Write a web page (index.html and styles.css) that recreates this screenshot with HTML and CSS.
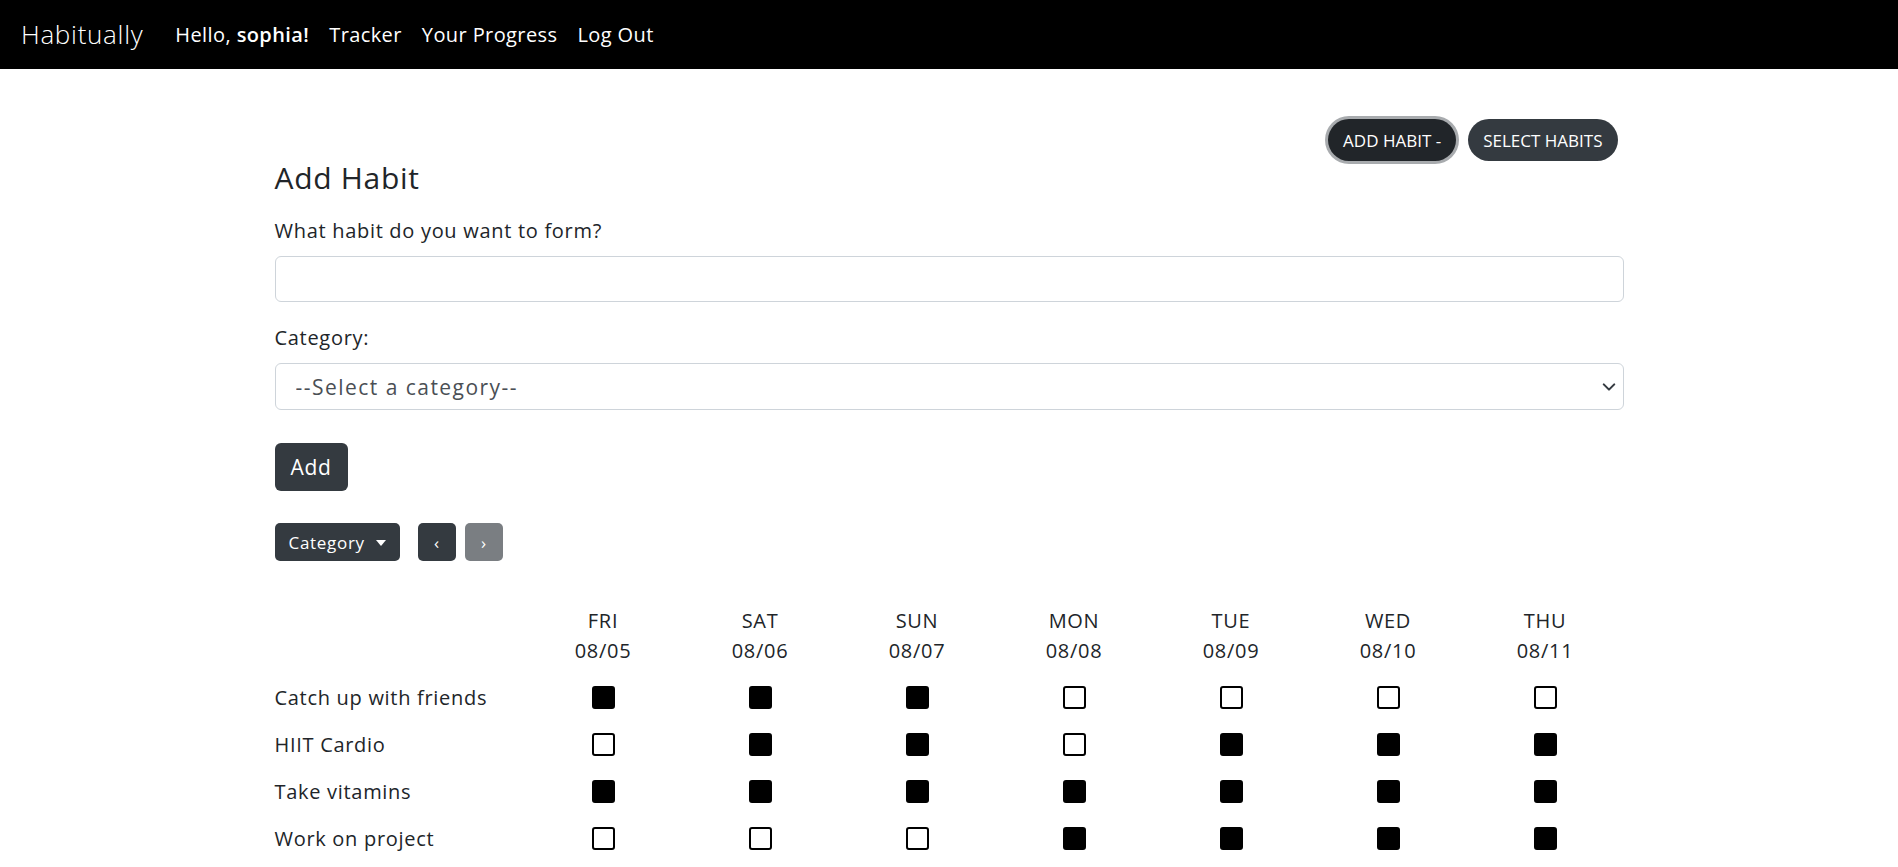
FILE: index.html
```html
<!DOCTYPE html>
<html lang="en">
<head>
  <meta charset="UTF-8" />
  <meta name="viewport" content="width=device-width, initial-scale=1.0"/>
  <title>Habitually</title>
  <link rel="stylesheet" href="styles.css">
</head>
<body>
  <nav class="navbar">
    <a class="brand" href="#">Habitually</a>
    <ul class="nav-links">
      <li><span>Hello, <strong>sophia!</strong></span></li>
      <li><a href="#">Tracker</a></li>
      <li><a href="#">Your Progress</a></li>
      <li><a href="#">Log Out</a></li>
    </ul>
  </nav>

  <div class="container">
    <div class="toggle-row">
      <button class="pill active">Add Habit -</button>
      <button class="pill">Select Habits</button>
    </div>

    <!-- add habit form -->
    <form class="add-form">
      <h4>Add Habit</h4>
      <label for="habit">What habit do you want to form?</label>
      <input type="text" id="habit">
      <label for="category">Category:</label>
      <div class="select-wrap">
        <select id="category">
          <option>--Select a category--</option>
          <option>Health</option>
          <option>Social</option>
          <option>Work</option>
        </select>
        <svg class="chevron" viewBox="0 0 16 16" width="14" height="14">
          <path d="M2 5l6 6 6-6" fill="none" stroke="#343a40" stroke-width="2.4" stroke-linecap="round" stroke-linejoin="round"/>
        </svg>
      </div>
      <button type="button" class="btn btn-add">Add</button>
    </form>

    <div class="toolbar">
      <button class="btn btn-sm">Category <span class="caret"></span></button>
      <div class="week-nav">
        <button class="btn btn-sm btn-square">&lsaquo;</button>
        <button class="btn btn-sm btn-square disabled">&rsaquo;</button>
      </div>
    </div>

    <!-- weekly tracker -->
    <div class="tracker">
      <div class="tracker-head" id="trackerHead">
        <div></div>
      </div>
      <div id="trackerBody"></div>
    </div>
  </div>

  <script>
    const days = [
      ["FRI", "08/05"], ["SAT", "08/06"], ["SUN", "08/07"], ["MON", "08/08"],
      ["TUE", "08/09"], ["WED", "08/10"], ["THU", "08/11"]
    ];

    const habits = [
      { name: "Catch up with friends", done: [1, 1, 1, 0, 0, 0, 0] },
      { name: "HIIT Cardio", done: [0, 1, 1, 0, 1, 1, 1] },
      { name: "Take vitamins", done: [1, 1, 1, 1, 1, 1, 1] },
      { name: "Work on project", done: [0, 0, 0, 1, 1, 1, 1] }
    ];

    const head = document.getElementById("trackerHead");
    days.forEach(([day, date]) => {
      const cell = document.createElement("div");
      cell.className = "day";
      cell.innerHTML = `${day}<br>${date}`;
      head.appendChild(cell);
    });

    const body = document.getElementById("trackerBody");
    habits.forEach(habit => {
      const row = document.createElement("div");
      row.className = "tracker-row";
      row.innerHTML = `<div class="habit-name">${habit.name}</div>` +
        habit.done.map(d => `<div class="cell"><input type="checkbox" ${d ? "checked" : ""}></div>`).join("");
      body.appendChild(row);
    });
  </script>
</body>
</html>
```

FILE: styles.css
```css
* {
  box-sizing: border-box;
}

body {
  margin: 0;
  font-family: "Open Sans", "Liberation Sans", sans-serif;
  font-size: 20px;
  line-height: 1.5;
  letter-spacing: 0.035em;
  color: #212529;
  background: #fff;
}

/* navbar */
.navbar {
  display: flex;
  align-items: center;
  height: 69px;
  padding: 0 21px;
  background: #000;
}

.brand {
  color: #fff;
  font-size: 26px;
  font-weight: 300;
  text-decoration: none;
  margin-right: 21px;
}

.nav-links {
  display: flex;
  list-style: none;
  margin: 0;
  padding: 0;
  letter-spacing: 0.02em;
}

.nav-links li {
  padding: 0 10px;
  color: #fff;
}

.nav-links li:first-child {
  padding-left: 11px;
}

.nav-links a {
  color: #fff;
  text-decoration: none;
}

.nav-links strong {
  font-weight: 600;
}

/* page */
.container {
  width: 1349px;
  margin: 0 auto;
}

.toggle-row {
  display: flex;
  justify-content: flex-end;
  gap: 12px;
  padding: 50px 6px 0 0;
}

.pill {
  height: 42px;
  padding: 0 15px;
  border: none;
  border-radius: 21px;
  background: #343a40;
  color: #fff;
  font-family: inherit;
  font-size: 17px;
  letter-spacing: 0;
  text-transform: uppercase;
}

.pill.active {
  background: #212529;
  box-shadow: 0 0 0 3px #a8abae;
}

.add-form h4 {
  margin: -1px 0 20px;
  font-size: 30px;
  font-weight: 400;
  line-height: 36px;
}

.add-form label {
  display: block;
  margin-bottom: 10px;
}

.add-form input[type="text"],
.add-form select {
  display: block;
  width: 100%;
  border: 1px solid #ced4da;
  border-radius: 6px;
  font-family: inherit;
  background: #fff;
}

.add-form input[type="text"] {
  height: 46px;
  margin-bottom: 21px;
}

.select-wrap {
  position: relative;
  margin-bottom: 33px;
}

.add-form select {
  height: 47px;
  padding: 0 20px;
  font-size: 21px;
  letter-spacing: 0.07em;
  color: #4a4f55;
  appearance: none;
}

.chevron {
  position: absolute;
  right: 8px;
  top: 17px;
  pointer-events: none;
}

.btn {
  border: none;
  border-radius: 6px;
  background: #343a40;
  color: #fff;
  font-family: inherit;
  letter-spacing: inherit;
}

.btn-add {
  display: block;
  height: 48px;
  padding: 0 16px;
  font-size: 21px;
}

.toolbar {
  display: flex;
  gap: 18px;
  margin-top: 32px;
}

.btn-sm {
  height: 38px;
  padding: 0 14px;
  border-radius: 5px;
  font-size: 17px;
}

.caret {
  display: inline-block;
  margin-left: 6px;
  vertical-align: 3px;
  border-top: 6px solid #fff;
  border-left: 5px solid transparent;
  border-right: 5px solid transparent;
}

.week-nav {
  display: flex;
  gap: 9px;
}

.btn-square {
  width: 38px;
  padding: 0;
}

.btn.disabled {
  opacity: 0.65;
}

/* tracker */
.tracker {
  margin-top: 45px;
}

.tracker-head,
.tracker-row {
  display: grid;
  grid-template-columns: 250px repeat(7, 1fr);
}

.tracker-head {
  margin-bottom: 8px;
}

.day {
  text-align: center;
}

.tracker-row {
  height: 47px;
  align-items: center;
}

.cell {
  display: flex;
  justify-content: center;
}

.cell input {
  appearance: none;
  width: 23px;
  height: 23px;
  margin: 0;
  border: 2px solid #000;
  border-radius: 3px;
  background: #fff;
}

.cell input:checked {
  background: #000;
}
```
